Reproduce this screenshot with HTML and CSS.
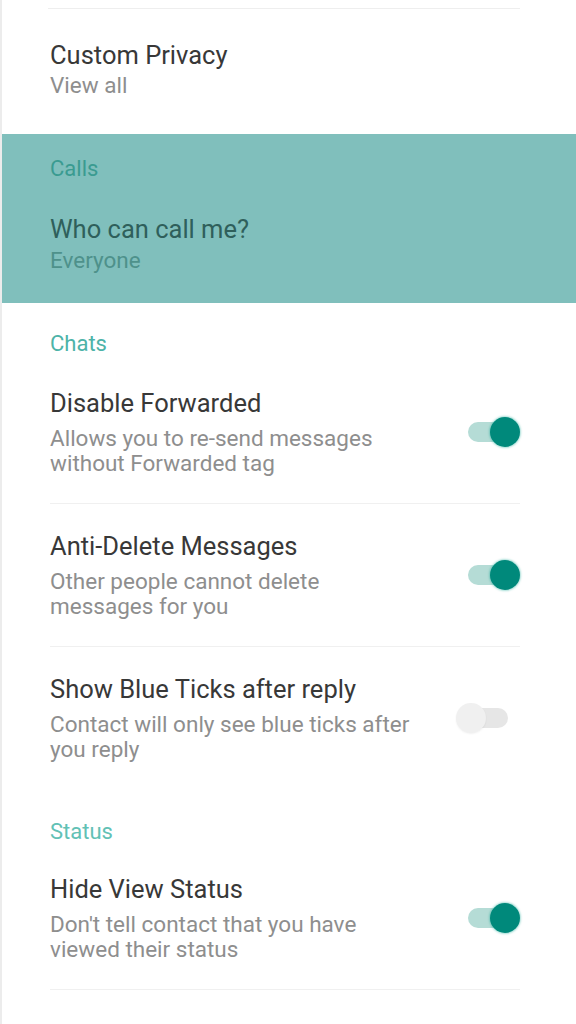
FILE: index.html
```html
<!DOCTYPE html>
<html>
<head>
<meta charset="utf-8">
<link rel="stylesheet" href="styles.css">
</head>
<body>
<div class="screen">
  <div class="top-stub"></div>
  <div class="item single item-first">
    <div class="text">
      <div class="title">Custom Privacy</div>
      <div class="sub">View all</div>
    </div>
  </div>

  <div class="band">
    <div class="header header-band">Calls</div>
    <div class="item single item-band">
      <div class="text">
        <div class="title">Who can call me?</div>
        <div class="sub">Everyone</div>
      </div>
    </div>
  </div>

  <div class="header header-chats">Chats</div>
  <div class="item divided">
    <div class="text">
      <div class="title">Disable Forwarded</div>
      <div class="sub">Allows you to re-send messages<br>without Forwarded tag</div>
    </div>
    <div class="toggle on"><span class="track"></span><span class="knob"></span></div>
  </div>
  <div class="item divided">
    <div class="text">
      <div class="title">Anti-Delete Messages</div>
      <div class="sub">Other people cannot delete<br>messages for you</div>
    </div>
    <div class="toggle on"><span class="track"></span><span class="knob"></span></div>
  </div>
  <div class="item">
    <div class="text">
      <div class="title">Show Blue Ticks after reply</div>
      <div class="sub">Contact will only see blue ticks after<br>you reply</div>
    </div>
    <div class="toggle off"><span class="track"></span><span class="knob"></span></div>
  </div>

  <div class="header header-status">Status</div>
  <div class="item divided">
    <div class="text">
      <div class="title">Hide View Status</div>
      <div class="sub">Don't tell contact that you have<br>viewed their status</div>
    </div>
    <div class="toggle on"><span class="track"></span><span class="knob"></span></div>
  </div>
</div>
</body>
</html>
```

FILE: styles.css
```css
html, body {
  margin: 0;
  padding: 0;
  background: #ffffff;
}
body {
  font-family: Roboto, "Noto Sans", "Liberation Sans", sans-serif;
  width: 576px;
  height: 1024px;
  overflow: hidden;
}
.screen {
  border-left: 2px solid #ececec;
  min-height: 1024px;
  box-sizing: border-box;
}
.top-stub {
  height: 8px;
  margin: 0 56px 0 46px;
  border-bottom: 1px solid #eeeeee;
}
.item {
  display: flex;
  align-items: center;
  justify-content: space-between;
  margin: 0 56px 0 48px;
  padding: 27px 0;
}
.item.divided {
  border-bottom: 1px solid #f0f0f0;
}
.title {
  font-size: 25.5px;
  line-height: 30px;
  color: #383838;
}
.sub {
  margin-top: 8px;
  font-size: 22.5px;
  line-height: 25px;
  color: #8e8e8e;
}
.single .sub {
  margin-top: 3.5px;
}
.item-first {
  padding-top: 30.5px;
  padding-bottom: 36px;
}
.band {
  background: #80bfbc;
}
.header {
  padding: 0 48px;
  font-size: 22px;
  line-height: 26px;
  color: #4db3a8;
}
.header-band {
  padding-top: 22px;
  color: #3a9b91;
}
.header-chats {
  padding-top: 27.5px;
  padding-bottom: 4.5px;
}
.header-status {
  padding-top: 30px;
  padding-bottom: 2px;
  color: #62c1b5;
}
.item-band {
  padding-top: 32px;
  padding-bottom: 30.5px;
}
.item-band .title {
  color: #2f5f5b;
}
.item-band .sub {
  color: #4e918b;
}
.toggle {
  position: relative;
  width: 52px;
  height: 34px;
  flex: none;
}
.toggle .track {
  position: absolute;
  left: 0;
  top: 7px;
  width: 40px;
  height: 20px;
  border-radius: 10px;
}
.toggle .knob {
  position: absolute;
  top: 2px;
  width: 30px;
  height: 30px;
  border-radius: 50%;
}
.toggle.on .track {
  background: #b5dcd6;
}
.toggle.on .knob {
  left: 22px;
  background: #00897b;
  box-shadow: 0 0 2px 1px rgba(0, 160, 140, 0.35);
}
.toggle.off .track {
  background: #e6e6e6;
}
.toggle.off .knob {
  left: -12px;
  background: #f0f0f0;
  box-shadow: 0 1px 2px rgba(0, 0, 0, 0.06);
}
```
